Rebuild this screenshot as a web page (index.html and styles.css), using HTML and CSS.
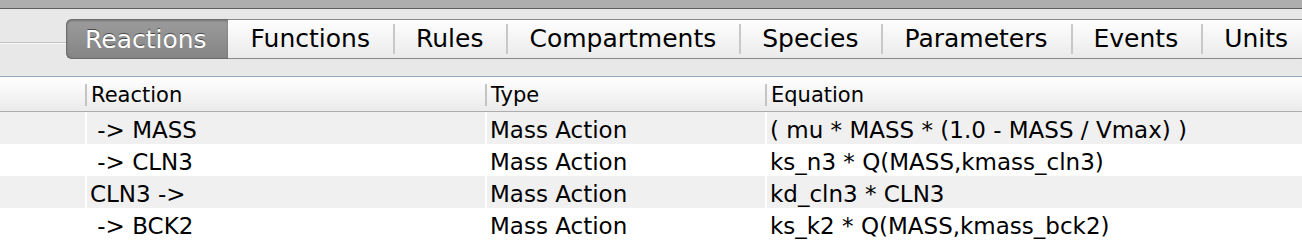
FILE: index.html
```html
<!DOCTYPE html>
<html lang="en">
<head>
    <meta charset="UTF-8">
    <title>Model - Reactions</title>
    <link rel="stylesheet" href="styles.css">
</head>
<body>
    <div class="titlebar"></div>
    <div class="toolbar">
        <div class="rule"></div>
        <div class="tabs">
            <div class="tab active">Reactions</div>
            <div class="tab first">Functions</div>
            <div class="tab">Rules</div>
            <div class="tab">Compartments</div>
            <div class="tab">Species</div>
            <div class="tab">Parameters</div>
            <div class="tab">Events</div>
            <div class="tab">Units</div>
        </div>
    </div>
    <table class="grid">
        <colgroup>
            <col class="col-row">
            <col class="col-reaction">
            <col class="col-type">
            <col>
        </colgroup>
        <thead>
            <tr>
                <th></th>
                <th class="sep">Reaction</th>
                <th class="sep">Type</th>
                <th class="sep">Equation</th>
            </tr>
        </thead>
        <tbody>
            <tr>
                <td></td>
                <td> -&gt; MASS</td>
                <td>Mass Action</td>
                <td>( mu * MASS * (1.0 - MASS / Vmax) )</td>
            </tr>
            <tr>
                <td></td>
                <td> -&gt; CLN3</td>
                <td>Mass Action</td>
                <td>ks_n3 * Q(MASS,kmass_cln3)</td>
            </tr>
            <tr>
                <td></td>
                <td>CLN3 -&gt;</td>
                <td>Mass Action</td>
                <td>kd_cln3 * CLN3</td>
            </tr>
            <tr>
                <td></td>
                <td> -&gt; BCK2</td>
                <td>Mass Action</td>
                <td>ks_k2 * Q(MASS,kmass_bck2)</td>
            </tr>
        </tbody>
    </table>
</body>
</html>
```

FILE: styles.css
```css
body {
    margin: 0;
    background-color: #e8e8e8;
    font-family: "DejaVu Sans", "Liberation Sans", sans-serif;
    color: #000000;
    overflow: hidden;
}
.titlebar {
    height: 8px;
    background-color: #aeaeae;
    border-bottom: 1px solid #5e5e5e;
}
.toolbar {
    height: 57px;
    padding-top: 10px;
    display: flex;
    align-items: flex-start;
    overflow: hidden;
}
.rule {
    flex: 0 0 66px;
    height: 1px;
    margin-top: 23px;
    background-color: #c2c2c2;
    box-shadow: 0 1px 0 #f8f8f8;
}
.tabs {
    display: flex;
    flex-shrink: 0;
    height: 38px;
    border: 1px solid #8a8a8a;
    border-right: none;
    border-radius: 6px 0 0 6px;
    background: linear-gradient(#fefefe, #ebebeb);
}
.tab {
    font-size: 25px;
    line-height: 38px;
    padding: 0 23px;
    white-space: nowrap;
    /* divider line on the left of each tab */
    background: linear-gradient(#c8c8c8, #c8c8c8) no-repeat 0 50% / 2px 30px;
}
.tab.first {
    background: none;
}
.tab.active {
    margin: -1px 0 -1px -1px;
    padding: 1px 21px 0 18px;
    border: 1px solid #6e6e6e;
    border-right: none;
    border-radius: 6px 0 0 6px;
    background: linear-gradient(#9b9b9b, #858585);
    color: #ffffff;
    text-shadow: 0 -1px 0 #4a4a4a;
    box-shadow: inset 0 1px 2px rgba(0,0,0,0.25);
}
.grid {
    width: 100%;
    table-layout: fixed;
    border-collapse: separate;
    border-spacing: 0;
    border-top: 1px solid #90a8c0;
    background-color: #ffffff;
}
.col-row {
    width: 85px;
}
.col-reaction {
    width: 400px;
}
.col-type {
    width: 280px;
}
.grid th {
    height: 32px;
    padding: 2px 0 0 6px;
    font-size: 21px;
    font-weight: normal;
    text-align: left;
    border-bottom: 1px solid #adadad;
    background: linear-gradient(#ffffff, #ebebeb);
}
.grid th.sep {
    background: linear-gradient(#c4c4c4, #c4c4c4) no-repeat 0 55% / 2px 22px, linear-gradient(#ffffff, #ebebeb);
}
.grid td {
    height: 32px;
    padding: 3px 0 0 3px;
    font-size: 23px;
    white-space: pre;
    border-left: 2px solid #ffffff;
    box-sizing: border-box;
}
.grid td:first-child {
    border-left: none;
}
.grid tbody tr:nth-child(odd) td {
    background-color: #f0f0f0;
}
```
